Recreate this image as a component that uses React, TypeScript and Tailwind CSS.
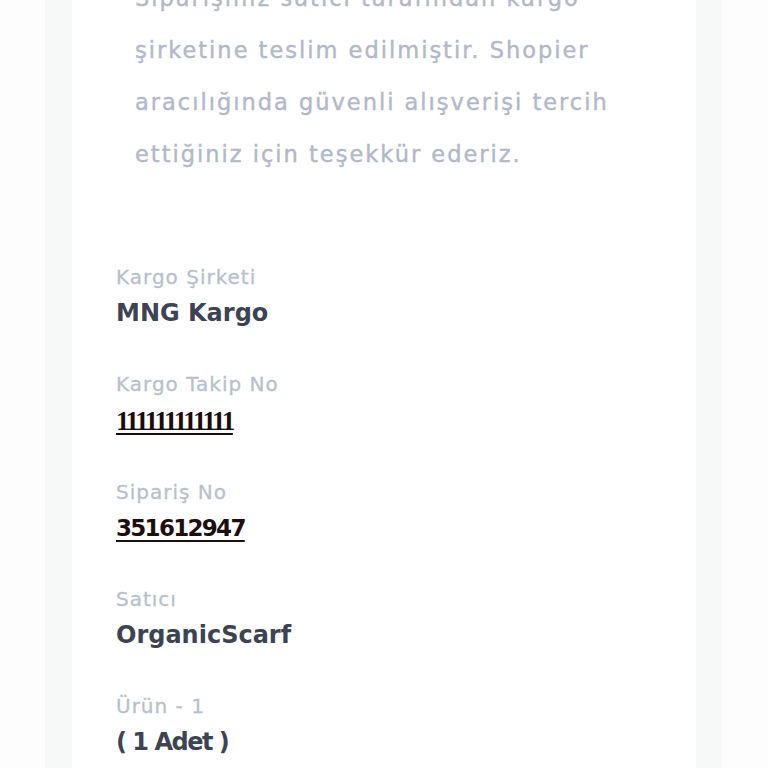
import React from "react";

const rows = [
  { label: "Kargo Şirketi", value: "MNG Kargo", kind: "text" },
  { label: "Kargo Takip No", value: "111111111111", kind: "track" },
  { label: "Sipariş No", value: "351612947", kind: "link" },
  { label: "Satıcı", value: "OrganicScarf", kind: "text" },
  { label: "Ürün - 1", value: "( 1 Adet )", kind: "qty" },
];

export default function App() {
  return (
    <div
      className="h-[768px] overflow-hidden bg-[#fdfdfd] pl-[45px] pr-[46px]"
      style={{ fontFamily: "'DejaVu Sans', Verdana, sans-serif" }}
    >
      <div className="h-full bg-[#f7f9f9] pl-[27px] pr-[26px]">
        <div className="flex h-full flex-col bg-white pl-[44px]">
          <p className="-mt-[28px] pl-[19px] text-[22.5px] leading-[52px] tracking-[2px] text-[#b1b8c9] [-webkit-text-stroke:0.4px_#b1b8c9]">
            Siparişiniz satıcı tarafından kargo
            <br />
            şirketine teslim edilmiştir. Shopier
            <br />
            aracılığında güvenli alışverişi tercih
            <br />
            ettiğiniz için teşekkür ederiz.
          </p>

          <div className="mt-[85px] flex flex-col gap-[47px]">
            {rows.map((r) => (
              <div key={r.label} className="flex flex-col">
                <div className="text-[20px] leading-[24px] tracking-[1px] text-[#b7bfcc] [-webkit-text-stroke:0.3px_#b7bfcc]">
                  {r.label}
                </div>
                {r.kind === "track" ? (
                  <a
                    className="mt-[13px] self-start text-[27px] leading-[24px] font-bold tracking-[-2.4px] text-[#1c0b0c] underline decoration-2 underline-offset-[3px]"
                    style={{ fontFamily: "'Liberation Serif', serif" }}
                  >
                    {r.value}
                  </a>
                ) : r.kind === "link" ? (
                  <a className="mt-[12px] self-start text-[23px] leading-[24px] font-bold tracking-[-1.7px] text-[#1d0f10] underline decoration-2 underline-offset-[4px]">
                    {r.value}
                  </a>
                ) : (
                  <div
                    className={
                      r.kind === "qty"
                        ? "mt-[12px] text-[24px] leading-[24px] font-bold tracking-[-1.5px] text-[#3c4454]"
                        : "mt-[12px] text-[24px] leading-[24px] font-bold text-[#3c4454]"
                    }
                  >
                    {r.value}
                  </div>
                )}
              </div>
            ))}
          </div>
        </div>
      </div>
    </div>
  );
}
